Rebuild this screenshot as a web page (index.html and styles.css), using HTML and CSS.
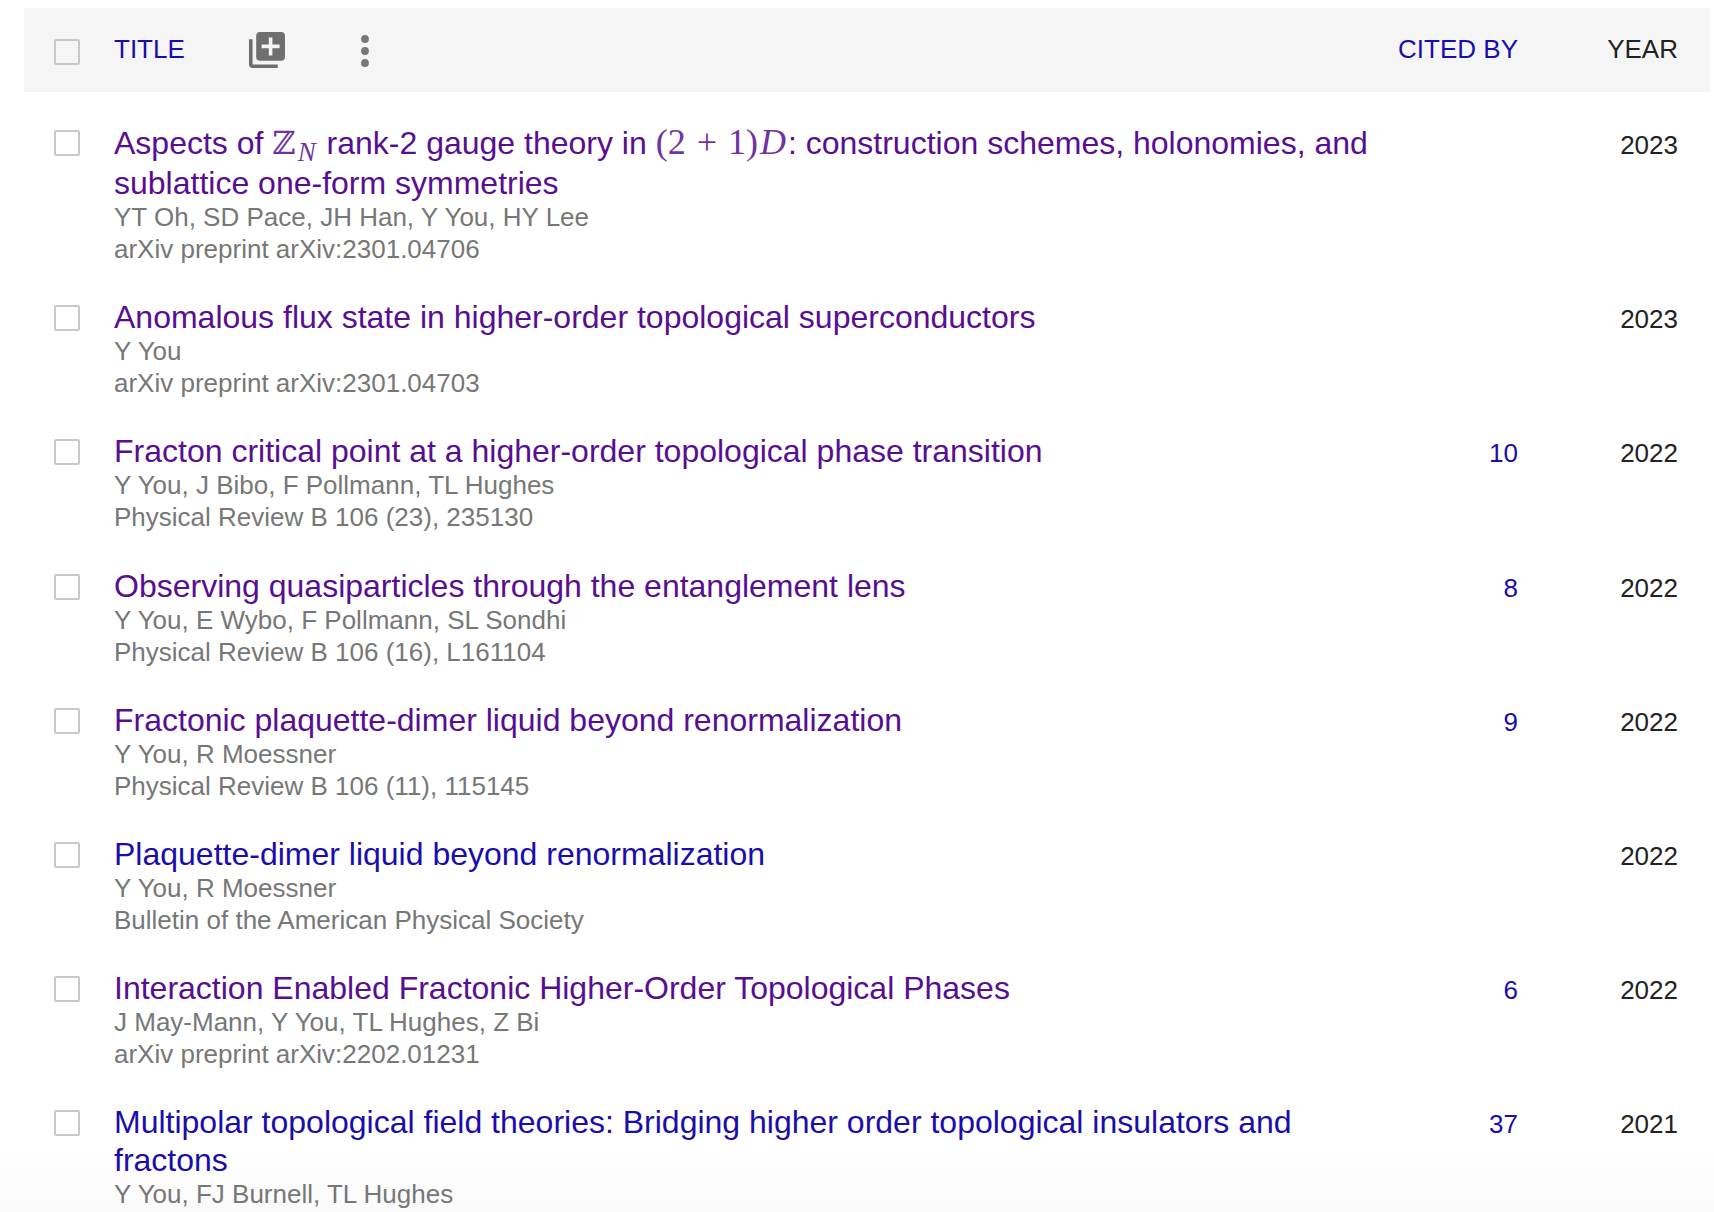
FILE: index.html
```html
<!DOCTYPE html>
<html lang="en">
<head>
<meta charset="utf-8">
<title>Publications</title>
<link rel="stylesheet" href="styles.css">
</head>
<body>
<div class="table">
  <div class="head">
    <span class="check"></span>
    <a class="head-title">TITLE</a>
    <svg class="add-icon" viewBox="2 2 20 20"><path d="M4 6H2v14c0 1.100.9 2 2 2h14v-2H4V6zm16-4H8c-1.100 0-2 .9-2 2v12c0 1.100.9 2 2 2h12c1.100 0 2-.9 2-2V4c0-1.100-.9-2-2-2zm-1 9h-4v4h-2v-4H9V9h4V5h2v4h4v2z"/></svg>
    <svg class="more-icon" viewBox="0 0 8 32"><circle cx="4" cy="4" r="3.900"/><circle cx="4" cy="16" r="3.900"/><circle cx="4" cy="28" r="3.900"/></svg>
    <a class="head-cited">CITED BY</a>
    <span class="head-year">YEAR</span>
  </div>

  <div class="row first">
    <span class="check"></span>
    <div class="main">
      <a class="title visited math-title">Aspects of <span class="math"><span class="bb">ℤ</span><sub class="ital">N</sub></span> rank-2 gauge theory in <span class="math">(2 + 1)<span class="ital dim">D</span></span>: construction schemes, holonomies, and sublattice one-form symmetries</a>
      <div class="meta">YT Oh, SD Pace, JH Han, Y You, HY Lee</div>
      <div class="meta">arXiv preprint arXiv:2301.04706</div>
    </div>
    <a class="cited"></a>
    <span class="year">2023</span>
  </div>

  <div class="row">
    <span class="check"></span>
    <div class="main">
      <a class="title visited">Anomalous flux state in higher-order topological superconductors</a>
      <div class="meta">Y You</div>
      <div class="meta">arXiv preprint arXiv:2301.04703</div>
    </div>
    <a class="cited"></a>
    <span class="year">2023</span>
  </div>

  <div class="row">
    <span class="check"></span>
    <div class="main">
      <a class="title visited">Fracton critical point at a higher-order topological phase transition</a>
      <div class="meta">Y You, J Bibo, F Pollmann, TL Hughes</div>
      <div class="meta">Physical Review B 106 (23), 235130</div>
    </div>
    <a class="cited">10</a>
    <span class="year">2022</span>
  </div>

  <div class="row">
    <span class="check"></span>
    <div class="main">
      <a class="title visited">Observing quasiparticles through the entanglement lens</a>
      <div class="meta">Y You, E Wybo, F Pollmann, SL Sondhi</div>
      <div class="meta">Physical Review B 106 (16), L161104</div>
    </div>
    <a class="cited">8</a>
    <span class="year">2022</span>
  </div>

  <div class="row">
    <span class="check"></span>
    <div class="main">
      <a class="title visited">Fractonic plaquette-dimer liquid beyond renormalization</a>
      <div class="meta">Y You, R Moessner</div>
      <div class="meta">Physical Review B 106 (11), 115145</div>
    </div>
    <a class="cited">9</a>
    <span class="year">2022</span>
  </div>

  <div class="row">
    <span class="check"></span>
    <div class="main">
      <a class="title">Plaquette-dimer liquid beyond renormalization</a>
      <div class="meta">Y You, R Moessner</div>
      <div class="meta">Bulletin of the American Physical Society</div>
    </div>
    <a class="cited"></a>
    <span class="year">2022</span>
  </div>

  <div class="row">
    <span class="check"></span>
    <div class="main">
      <a class="title visited">Interaction Enabled Fractonic Higher-Order Topological Phases</a>
      <div class="meta">J May-Mann, Y You, TL Hughes, Z Bi</div>
      <div class="meta">arXiv preprint arXiv:2202.01231</div>
    </div>
    <a class="cited">6</a>
    <span class="year">2022</span>
  </div>

  <div class="row">
    <span class="check"></span>
    <div class="main">
      <a class="title">Multipolar topological field theories: Bridging higher order topological insulators and fractons</a>
      <div class="meta">Y You, FJ Burnell, TL Hughes</div>
    </div>
    <a class="cited">37</a>
    <span class="year">2021</span>
  </div>
</div>
<div class="fade"></div>
</body>
</html>
```
FILE: styles.css
```css
html, body {
  margin: 0;
  height: 1212px;
  overflow: hidden;
  background: #fff;
}

body {
  position: relative;
  font-family: "Liberation Sans", Arial, sans-serif;
}

.table {
  position: relative;
  z-index: 1;
  padding: 8px 4px 0 24px;
}

.head {
  display: flex;
  align-items: center;
  height: 84px;
  background: #f5f5f5;
  font-size: 26px;
}

.check {
  flex: none;
  box-sizing: border-box;
  width: 26px;
  height: 26px;
  margin-left: 30px;
  border: 2px solid #c8c8c8;
  border-radius: 2px;
  background: #fff;
}

.head .check {
  background: #f5f5f5;
  margin-top: 4px;
}

.head-title {
  margin-left: 34px;
  margin-top: -2px;
  color: #1a0dab;
}

.add-icon {
  width: 36px;
  height: 36px;
  margin-left: 64px;
  margin-top: 0;
  fill: #6f6f6f;
}

.more-icon {
  width: 8px;
  height: 32px;
  margin-left: 76px;
  margin-top: 2px;
  fill: #777;
}

.head-cited {
  margin-left: auto;
  margin-top: -2px;
  color: #1a0dab;
}

.head-year {
  width: 160px;
  margin-right: 32px;
  margin-top: -2px;
  text-align: right;
  color: #222;
}

.row {
  display: flex;
  align-items: flex-start;
  padding: 16px 0 16.200px;
}

.row.first {
  margin-top: 16px;
}

.row .check {
  margin-top: 7px;
}

.row.first .check {
  margin-top: 6px;
}

.main {
  width: 1290px;
  margin-left: 34px;
  flex: none;
}

.title {
  display: block;
  margin-bottom: -1px;
  font-size: 32px;
  line-height: 38px;
  color: #1a0dab;
}

.title.visited {
  color: #580e91;
}

.title.math-title {
  margin-bottom: -2px;
  line-height: 39.500px;
}

.math {
  font-family: "Liberation Serif", "DejaVu Serif", serif;
  font-size: 36px;
  line-height: 0;
  word-spacing: 2px;
  opacity: 0.85;
}

.bb {
  font-family: "DejaVu Serif", serif;
  font-size: 32px;
}

.ital {
  font-style: italic;
}

.dim {
  margin: 0 2px;
}

.math sub {
  margin-left: 2px;
  margin-right: 2px;
  font-size: 27px;
  line-height: 0;
  vertical-align: -7px;
}

.meta {
  font-size: 26px;
  line-height: 32px;
  color: #777;
}

.meta:last-child {
  margin-bottom: 1px;
}

.cited {
  flex: none;
  width: 114px;
  margin-top: 5px;
  font-size: 26px;
  line-height: 32px;
  text-align: right;
  color: #1a0dab;
}

.year {
  flex: none;
  width: 160px;
  margin-top: 5px;
  font-size: 26px;
  line-height: 32px;
  text-align: right;
  color: #222;
}

.fade {
  position: absolute;
  left: 0;
  right: 0;
  bottom: 0;
  height: 62px;
  background: linear-gradient(to bottom, rgba(0, 0, 0, 0), rgba(0, 0, 0, 0.02));
}
```
